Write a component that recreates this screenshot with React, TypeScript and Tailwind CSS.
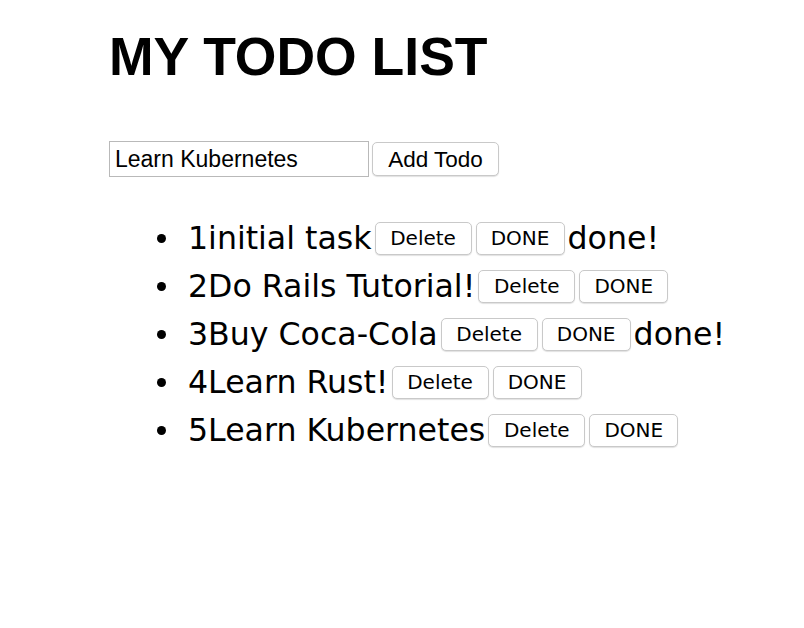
import React from 'react';

const todos = [
  { id: 1, title: 'initial task', done: true },
  { id: 2, title: 'Do Rails Tutorial!', done: false },
  { id: 3, title: 'Buy Coca-Cola', done: true },
  { id: 4, title: 'Learn Rust!', done: false },
  { id: 5, title: 'Learn Kubernetes', done: false },
];

const btn =
  'flex h-[33px] items-center justify-center rounded-[5px] border border-[#c9c9c9] bg-white text-[20px] leading-none text-black shadow-[0_1px_1px_rgba(0,0,0,0.12)]';

const App = () => {
  return (
    <div className="min-h-screen bg-white pl-[109px] text-black font-['Liberation_Sans',Arial,sans-serif]">
      <h1 className="mt-[26px] text-[53.5px] font-bold leading-[61px]">MY TODO LIST</h1>

      {/* New todo form */}
      <div className="mt-[54px] flex items-start">
        <input
          type="text"
          defaultValue="Learn Kubernetes"
          className="h-[36px] w-[260px] border border-[#b9b9b9] px-[5px] text-[23px] outline-none"
        />
        <button className="ml-[3px] mt-[1px] h-[34px] w-[127px] rounded-[5px] border border-[#c9c9c9] bg-white text-[22.5px] shadow-[0_1px_1px_rgba(0,0,0,0.12)]">
          Add Todo
        </button>
      </div>

      {/* Todo list */}
      <ul className="mt-[37px] pl-[48px] font-['DejaVu_Sans',sans-serif]">
        {todos.map((todo) => (
          <li key={todo.id} className="flex h-[48px] items-center">
            <span className="mr-[22px] h-[9px] w-[9px] rounded-full bg-black" />
            <span className="text-[31.6px] leading-[44px]">
              {todo.id}
              {todo.title}
            </span>
            <button className={`${btn} ml-[3px] w-[97px]`}>Delete</button>
            <button className={`${btn} ml-[4px] w-[89px]`}>DONE</button>
            {todo.done && <span className="ml-[3px] text-[31.6px] leading-[44px]">done!</span>}
          </li>
        ))}
      </ul>
    </div>
  );
};

export default App;
